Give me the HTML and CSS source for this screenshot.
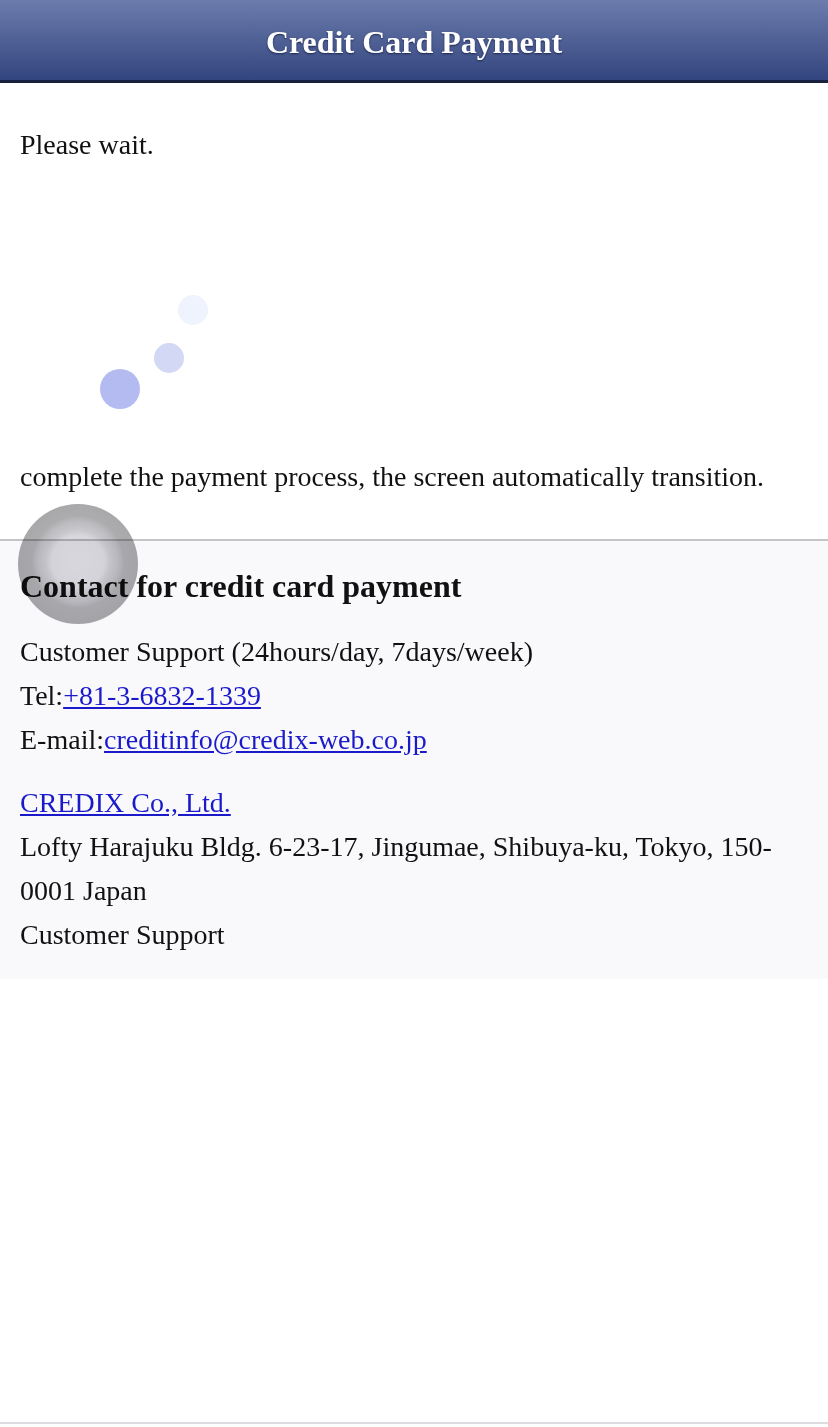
FILE: index.html
```html
<!DOCTYPE html>
<html lang="en">
<head>
  <meta charset="UTF-8">
  <title>Credit Card Payment</title>
  <link rel="stylesheet" href="styles.css">
</head>
<body>

  <div class="header">Credit Card Payment</div>

  <div class="main">
    <p class="wait">Please wait.</p>
    <div class="loader">
      <span class="dot dot1"></span>
      <span class="dot dot2"></span>
      <span class="dot dot3"></span>
    </div>
    <p class="note">complete the payment process, the screen automatically transition.</p>
  </div>

  <div class="contact">
    <h2>Contact for credit card payment</h2>
    <p class="lines">
      Customer Support (24hours/day, 7days/week)<br>
      Tel:<a href="#">+81-3-6832-1339</a><br>
      E-mail:<a href="#">creditinfo@credix-web.co.jp</a>
    </p>
    <p class="lines">
      <a href="#">CREDIX Co., Ltd.</a><br>
      Lofty Harajuku Bldg. 6-23-17, Jingumae, Shibuya-ku, Tokyo, 150-0001 Japan<br>
      Customer Support
    </p>
  </div>

  <div class="bottom"></div>

  <div class="touch"></div>

</body>
</html>
```

FILE: styles.css
```css
body { margin: 0; font-family: "Liberation Serif", "Times New Roman", serif; font-size: 28px; color: #111; background: #fff; min-height: 1427px; position: relative; }
.header { height: 80px; line-height: 84px; text-align: center; color: #fff; font-weight: bold; font-size: 32px; text-shadow: 0 1px 2px #1c2750; background: linear-gradient(#6c7cad, #33457e); border-bottom: 3px solid #17213f; }
.main { padding: 0 20px; }
.wait { margin: 0; padding-top: 46px; line-height: 32px; }
.loader { position: relative; height: 300px; }
.dot { position: absolute; border-radius: 50%; }
.dot1 { left: 80px; top: 208px; width: 40px; height: 40px; background: #b4bbf1; }
.dot2 { left: 134px; top: 182px; width: 30px; height: 30px; background: #d3d9f4; }
.dot3 { left: 158px; top: 134px; width: 30px; height: 30px; background: #eef3fe; }
.note { margin: 0; padding-bottom: 46px; line-height: 32px; }
.contact { background: #f9f9fc; border-top: 2px solid #c4c4c6; padding: 27px 20px 22px; }
.contact h2 { margin: 0 0 25px; font-size: 32px; line-height: 37px; }
.lines { margin: 0 0 19px; line-height: 44px; }
.lines:last-child { margin-bottom: 0; }
a { color: #1a1acb; }
.touch { position: absolute; left: 18px; top: 504px; width: 120px; height: 120px; border-radius: 50%; mix-blend-mode: multiply; background: radial-gradient(circle at 50% 48%, #dcdce0 0, #d8d8dc 26px, #c8c8cc 32px, #bcbcc0 40px, #acacae 46px, #a8a8aa 60px); }
.bottom { position: absolute; left: 0; right: 0; top: 1422px; height: 2px; background: #dcdce0; }
```
